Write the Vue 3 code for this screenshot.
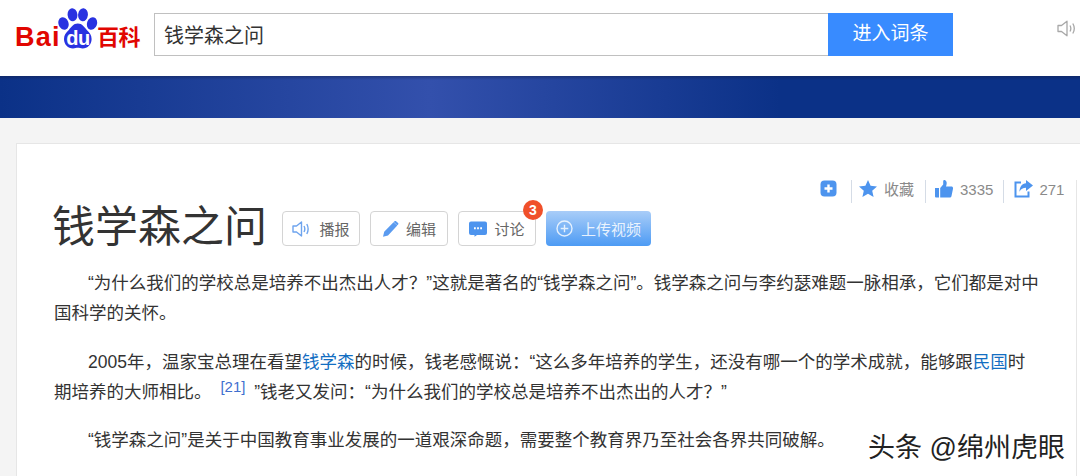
<script setup>
const actions = [
  { key: 'play', label: '播报' },
  { key: 'edit', label: '编辑' },
  { key: 'talk', label: '讨论', badge: 3 },
]
</script>

<template>
  <div class="page">
    <header class="top">
      <div class="logo">
        <span class="bai">Bai</span>
        <span class="paw">
          <svg width="42" height="42" viewBox="0 0 42 42">
            <g fill="#2932e1">
              <ellipse cx="6.500" cy="15.500" rx="5" ry="6.500" transform="rotate(-20 6.500 15.500)"/>
              <ellipse cx="15.500" cy="6.800" rx="4.900" ry="6.500" transform="rotate(-6 15.500 6.800)"/>
              <ellipse cx="26" cy="6.800" rx="4.900" ry="6.500" transform="rotate(6 26 6.800)"/>
              <ellipse cx="35" cy="15.500" rx="5" ry="6.500" transform="rotate(20 35 15.500)"/>
              <path d="M20.800 15.500c-4.500 0-6.500 3.500-9 6.500-2.800 2.800-4.800 5-4.800 9 0 5.500 4 9.500 9 9.500 2 0 3.300-.7 4.800-.7s2.800.7 4.800.7c5 0 9-4 9-9.500 0-4-2-6.200-4.800-9-2.500-3-4.500-6.500-9-6.500z"/>
            </g>
          </svg>
          <span class="du">du</span>
        </span>
        <span class="bk">百科</span>
      </div>
      <div class="search">
        <div class="input">钱学森之问</div>
        <div class="go">进入词条</div>
      </div>
      <svg class="sound" width="19" height="17" viewBox="0 0 19 17" fill="none" stroke="#a8a8a8" stroke-width="1.300">
        <path d="M1 5.500h3.500L10 1.200v14.600L4.500 11.500H1z" stroke-linejoin="round"/>
        <path d="M13 5.500c1 1.800 1 4.200 0 6M15.800 3.500c1.800 3 1.800 7 0 10"/>
      </svg>
    </header>
    <div class="band"></div>
    <main class="card">
      <div class="tools">
        <svg class="plus" width="17" height="17" viewBox="0 0 17 17">
          <rect x="0.500" y="0.500" width="16" height="16" rx="4" fill="#4d94ee"/>
          <path d="M8.500 4.500v8M4.500 8.500h8" stroke="#fff" stroke-width="2.400"/>
        </svg>
        <i class="sep s1"></i>
        <svg width="18" height="17" viewBox="0 0 18 17"><path fill="#4d94ee" d="M9 0l2.600 5.800 6.400.7-4.800 4.200 1.400 6.300L9 13.700 3.400 17l1.400-6.300L0 6.500l6.400-.7z"/></svg>
        <span class="tx t1">收藏</span>
        <i class="sep s2"></i>
        <svg width="18" height="18" viewBox="0 0 18 18"><path fill="#4d94ee" d="M0 8h4v9.500H1a1 1 0 0 1-1-1zM5.200 8l3-3.500V1.300C8.200.3 9 0 9.700.1c1.300.3 2 1.700 2 3.100 0 1-.3 2.200-.7 3.300h5.300c1.200 0 2 1 1.700 2.200l-1.500 7.300c-.2 1-1 1.600-2 1.600H5.200z"/></svg>
        <span class="tx t2">3335</span>
        <i class="sep s3"></i>
        <svg width="19" height="18" viewBox="0 0 19 18" fill="none"><path d="M7 2.500H1.500v14h13v-5" stroke="#4d94ee" stroke-width="2"/><path fill="#4d94ee" d="M12 0l7 5.500-7 5.500V7.800c-3 0-5 1-6.500 4 0-5 2.500-8 6.500-8.500z"/></svg>
        <span class="tx t3">271</span>
      </div>
      <i class="edge"></i>
      <div class="head">
        <h1>钱学森之问</h1>
        <div class="btns">
          <div v-for="a in actions" :key="a.key" class="btn">
            <svg v-if="a.key === 'play'" width="18" height="16" viewBox="0 0 18 16" fill="none" stroke="#6ea4ee" stroke-width="1.400">
              <path d="M1 5h3.500L9.500 1v14l-5-4H1z" stroke-linejoin="round"/>
              <path d="M12 5c1 1.800 1 4.200 0 6M14.800 3c1.600 3 1.600 7 0 10"/>
            </svg>
            <svg v-else-if="a.key === 'edit'" class="talk" width="17" height="16" viewBox="0 0 17 16">
              <path fill="#5a9bf0" d="M11.500 1.200l3.800 3.400L6 14.400l-5 1.300 1.200-5zM12.600.2c.5-.4 1.100-.3 1.500 0l2 1.800c.4.400.4 1 0 1.400l-.8.800-3.600-3.300z"/>
            </svg>
            <svg v-else class="talk" width="18" height="16" viewBox="0 0 18 16">
              <path fill="#4d94ee" d="M2 .5h14a2 2 0 0 1 2 2v9.500a2 2 0 0 1-2 2H8l-2.500 1.800V14H2a2 2 0 0 1-2-2V2.500a2 2 0 0 1 2-2z"/>
              <path d="M5 7.300h1.800M8.100 7.300h1.800M11.200 7.300H13" stroke="#fff" stroke-width="2"/>
            </svg>
            <span>{{ a.label }}</span>
            <b v-if="a.badge" class="badge">{{ a.badge }}</b>
          </div>
          <div class="upload">
            <svg width="17" height="17" viewBox="0 0 17 17" fill="none" stroke="#fff" stroke-opacity="0.800" stroke-width="1.400">
              <circle cx="8.500" cy="8.500" r="7.500"/>
              <path d="M8.500 4.700v7.600M4.700 8.500h7.600"/>
            </svg>
            <span>上传视频</span>
          </div>
        </div>
      </div>
      <article class="body">
        <p>“为什么我们的学校总是培养不出杰出人才？”这就是著名的“钱学森之问”。钱学森之问与李约瑟难题一脉相承，它们都是对中国科学的关怀。</p>
        <p>2005年，温家宝总理在看望<a>钱学森</a>的时候，钱老感慨说：“这么多年培养的学生，还没有哪一个的学术成就，能够跟<a>民国</a>时期培养的大师相比。 <sup>[21]</sup> ”钱老又发问：“为什么我们的学校总是培养不出杰出的人才？”</p>
        <p>“钱学森之问”是关于中国教育事业发展的一道艰深命题，需要整个教育界乃至社会各界共同破解。</p>
      </article>
    </main>
    <div class="mark">头条 @绵州虎眼</div>
  </div>
</template>

<style>
html, body { margin: 0; background: #f4f4f4; overflow: hidden; }
</style>

<style scoped>
.page {
  position: relative;
  width: 1080px;
  height: 476px;
  overflow: hidden;
  background: #f4f4f4;
  font-family: "Liberation Sans", "Noto Sans CJK SC", sans-serif;
}
.top {
  height: 76px;
  background: #fff;
  display: flex;
  align-items: flex-start;
  box-sizing: border-box;
  padding-left: 15px;
}
.logo {
  width: 128px;
  margin-top: 8px;
  height: 42px;
  display: flex;
  align-items: flex-end;
  flex: none;
  color: #e10601;
}
.bai {
  font: bold 27px/30px "Liberation Sans", sans-serif;
  width: 42px;
  height: 30px;
  letter-spacing: 1.300px;
  margin-bottom: -2px;
}
.paw {
  position: relative;
  width: 41px;
  height: 42px;
  flex: none;
}
.paw svg { display: block; }
.du {
  position: absolute;
  left: 7px;
  top: 20px;
  width: 28px;
  text-align: center;
  font: bold 20px/20px "Liberation Sans", sans-serif;
  color: #fff;
  letter-spacing: -0.500px;
}
.bk {
  font: bold 22px/26px "Noto Sans CJK SC", sans-serif;
  margin-left: -1px;
  letter-spacing: -0.500px;
  margin-bottom: 2px;
  white-space: nowrap;
}
.search {
  margin-left: 11px;
  margin-top: 13px;
  display: flex;
  height: 43px;
}
.input {
  width: 674px;
  height: 43px;
  box-sizing: border-box;
  border: 1px solid #c0c0c0;
  border-right: 0;
  padding-left: 9px;
  font-size: 20px;
  line-height: 45px;
  color: #333;
}
.go {
  width: 125px;
  height: 43px;
  background: #388bff;
  color: #fff;
  font-size: 19px;
  line-height: 41px;
  text-align: center;
}
.sound { margin-left: 104px; margin-top: 20px; }
.band {
  height: 42px;
  background:
    linear-gradient(180deg, rgba(20, 30, 70, 0.45) 0, rgba(20, 30, 70, 0) 4px),
    linear-gradient(90deg, #0b3187 0, #3350ac 430px, #0b3187 780px, #0b3187 100%);
}
.card {
  position: relative;
  margin: 25px 0 0 16px;
  width: 1080px;
  height: 340px;
  box-sizing: border-box;
  background: #fff;
  border: 1px solid #e6e6e6;
  padding: 0 0 0 37px;
}
.tools {
  position: absolute;
  top: 36px;
  left: 803px;
  display: flex;
  align-items: flex-start;
  white-space: nowrap;
}
.sep { width: 1px; height: 23px; background: #d5dce6; display: block; }
.s1 { margin: 0 7px 0 14px; }
.s2 { margin: 0 9px 0 11px; }
.s3 { margin: 0 10px 0 10px; }
.tx {
  font-size: 15px;
  line-height: 20px;
  color: #8a8a8a;
}
.t1 { margin-left: 7px; }
.t2 { margin-left: 7px; }
.t3 { margin-left: 6px; }
.edge {
  position: absolute;
  left: 1059px;
  top: 36px;
  width: 1px;
  height: 304px;
  background: #e6e6e6;
}
.head { display: flex; align-items: flex-start; height: 118px; }
h1 {
  margin: 55px 0 0 -2px;
  font-size: 43px;
  line-height: 56px;
  font-weight: 400;
  color: #333;
}
.btns { display: flex; margin: 67px 0 0 15px; gap: 10px; }
.btn {
  position: relative;
  width: 78px;
  height: 35px;
  box-sizing: border-box;
  border: 1px solid #d4d4d4;
  border-radius: 4px;
  background: #fff;
  display: flex;
  align-items: center;
  justify-content: center;
  gap: 9px;
  color: #666;
  font-size: 15px;
}
.talk { margin-right: -2px; }
.badge {
  position: absolute;
  top: -12px;
  right: -8px;
  width: 20px;
  height: 20px;
  border-radius: 50%;
  background: #f0502a;
  color: #fff;
  font: bold 14px/20px "Liberation Sans", sans-serif;
  text-align: center;
}
.upload {
  width: 105px;
  height: 35px;
  border-radius: 4px;
  background: linear-gradient(180deg, #a9cdf8 0, #4d9bf4 100%);
  display: flex;
  align-items: center;
  justify-content: center;
  gap: 8px;
  color: rgba(255, 255, 255, 0.85);
  font-size: 15px;
}
.body { width: 986px; margin-top: 6px; }
.body p {
  margin: 0 0 18.500px;
  font-size: 17.500px;
  line-height: 30px;
  color: #333;
  text-indent: 34px;
}
.body a { color: #136ec2; }
sup {
  color: #3f6fcf;
  font-size: 15px;
  line-height: 0;
  vertical-align: 6px;
  margin: 0 4px;
}
.mark {
  position: absolute;
  left: 868px;
  top: 430px;
  font-size: 27px;
  line-height: 36px;
  color: #222;
  text-shadow: 0 0 2px #fff, 0 1px 1px #fff;
  white-space: nowrap;
}
</style>
